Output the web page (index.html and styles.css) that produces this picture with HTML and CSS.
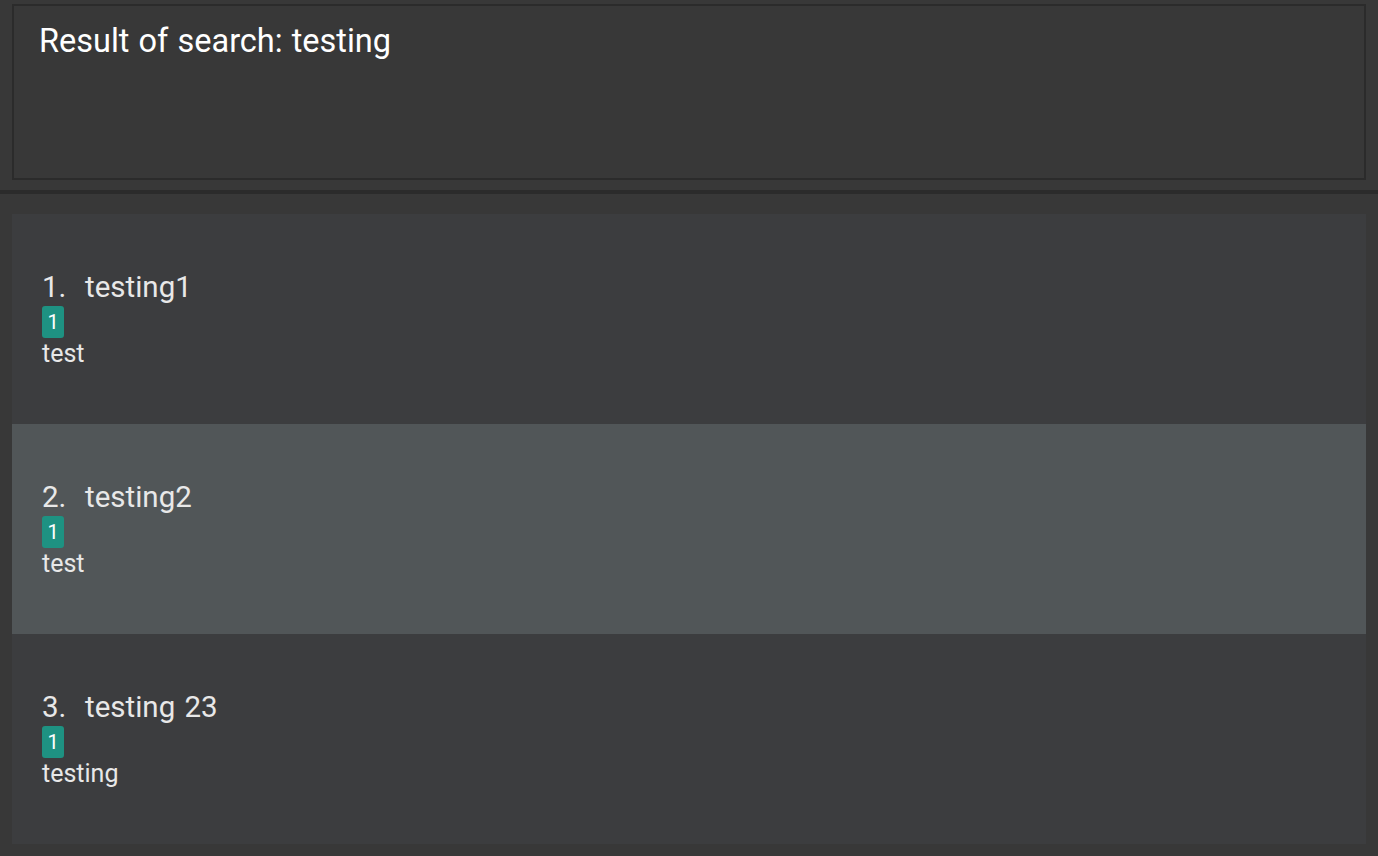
FILE: index.html
```html
<!DOCTYPE html>
<html>
<head>
<meta charset="utf-8">
<link rel="stylesheet" href="styles.css">
</head>
<body>
<div class="app">
  <div class="top">
    <div class="result-box">
      <div class="result-text">Result of search: testing</div>
    </div>
  </div>
  <div class="separator"></div>
  <div class="list-area">
    <div class="list">
      <div class="row">
        <div class="title">1.&nbsp;&nbsp;testing1</div>
        <div class="tags"><span class="tag">1</span></div>
        <div class="desc">test</div>
      </div>
      <div class="row selected">
        <div class="title">2.&nbsp;&nbsp;testing2</div>
        <div class="tags"><span class="tag">1</span></div>
        <div class="desc">test</div>
      </div>
      <div class="row">
        <div class="title">3.&nbsp;&nbsp;testing 23</div>
        <div class="tags"><span class="tag">1</span></div>
        <div class="desc">testing</div>
      </div>
    </div>
  </div>
</div>
</body>
</html>
```
FILE: styles.css
```css
html, body {
  margin: 0;
  padding: 0;
  background: #383838;
  font-family: Roboto, "Noto Sans", sans-serif;
}
.app {
  width: 1378px;
  height: 856px;
  display: flex;
  flex-direction: column;
  background: #383838;
}
.top {
  padding: 4px 12px 10px 12px;
}
.result-box {
  height: 172px;
  border: 2px solid #2b2b2b;
  background: #383838;
  padding: 0 25px;
}
.result-text {
  color: #ffffff;
  font-size: 32.5px;
  line-height: 40px;
  margin-top: 15px;
  word-spacing: 1px;
}
.separator {
  height: 4px;
  background: #2b2b2b;
}
.list-area {
  flex: 1;
  padding: 20px 12px 12px 12px;
}
.list {
  display: flex;
  flex-direction: column;
}
.row {
  height: 210px;
  background: #3c3d3f;
  display: flex;
  flex-direction: column;
  justify-content: center;
  padding-left: 30px;
  color: #e8e8e8;
}
.row.selected {
  background: #515658;
}
.title {
  font-size: 29.5px;
  line-height: 36px;
  word-spacing: 2px;
}
.tags {
  display: flex;
  margin-top: 1px;
}
.tag {
  background: #1e9282;
  color: #ffffff;
  border-radius: 3px;
  width: 22px;
  height: 32px;
  font-size: 20px;
  line-height: 32px;
  text-align: center;
}
.desc {
  font-size: 25px;
  line-height: 30px;
  margin-top: 1px;
}
```
